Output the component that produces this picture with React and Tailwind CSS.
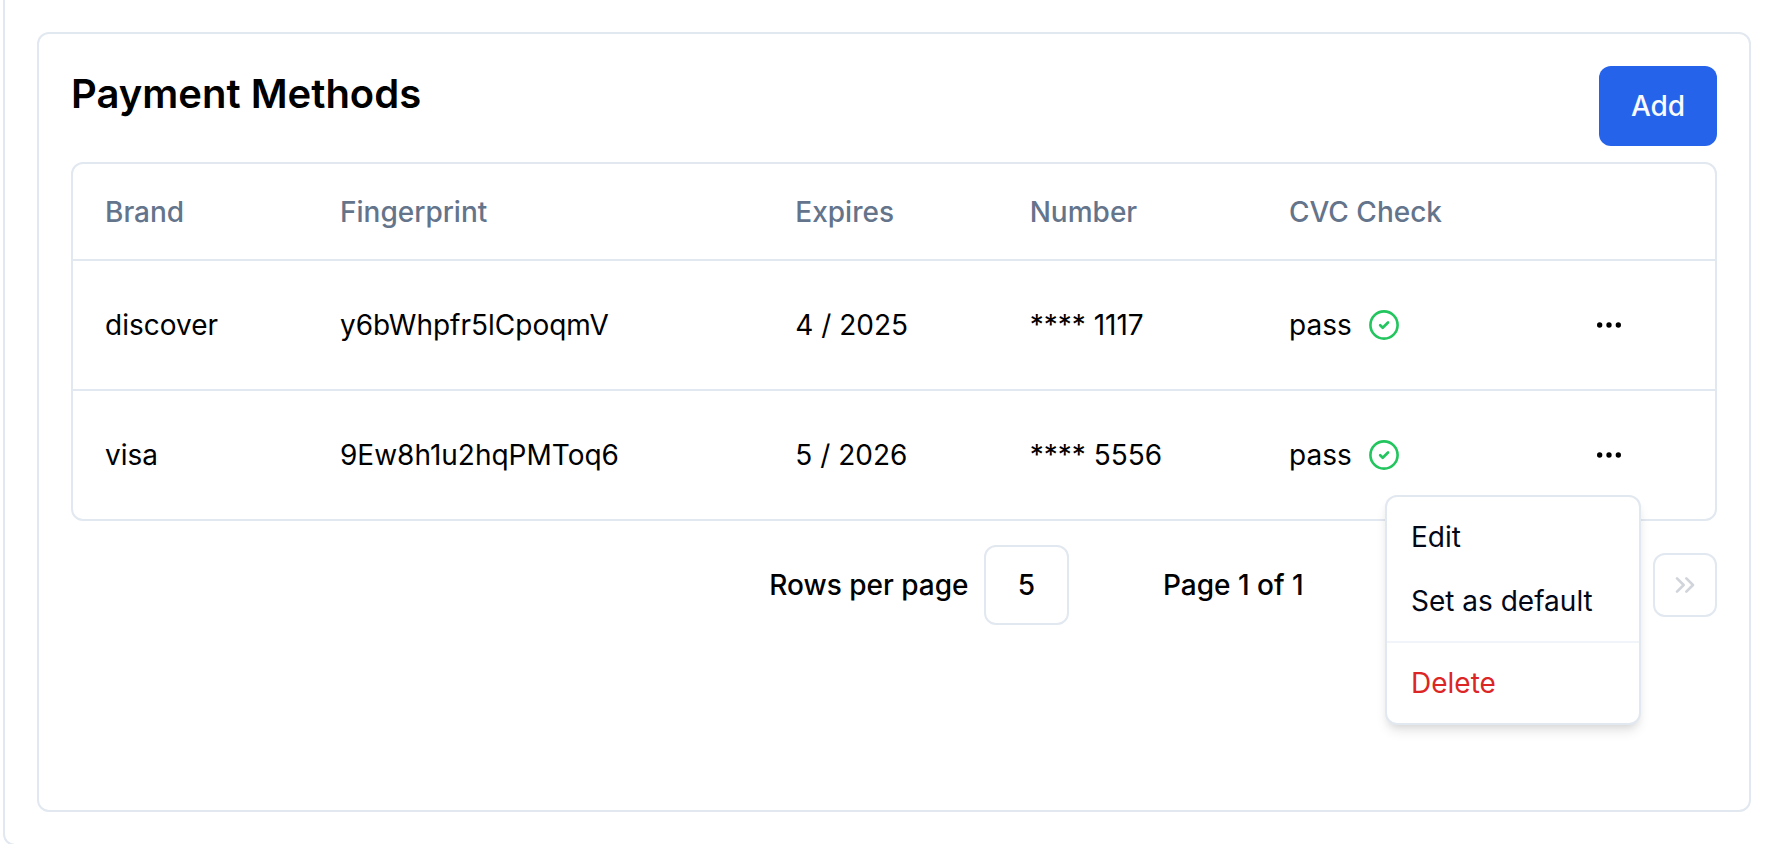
import { ChevronsRight, Ellipsis } from "lucide-react";

const methods = [
  { brand: "discover", fingerprint: "y6bWhpfr5lCpoqmV", expires: "4 / 2025", number: "**** 1117", check: "pass" },
  { brand: "visa", fingerprint: "9Ew8h1u2hqPMToq6", expires: "5 / 2026", number: "**** 5556", check: "pass" },
];

const columns = "grid grid-cols-[235px_455.3px_234.4px_259.3px_304px_1fr] items-center";

function PassIcon() {
  return (
    <svg className="size-[30px] text-[#22c55e]" viewBox="0 0 30 30" fill="none" stroke="currentColor" strokeLinecap="round" strokeLinejoin="round">
      <circle cx="15" cy="15" r="13.6" strokeWidth="2.6" />
      <path d="M11.2 15.3 L13.7 17.7 L19 12.5" strokeWidth="2.7" />
    </svg>
  );
}

function ActionsMenu() {
  return (
    <div className="absolute top-[104px] right-[74px] z-10 w-64 rounded-xl border-2 border-[#e2e8f0] bg-white py-2 text-[#020817] shadow-[0_8px_12px_-2px_rgba(0,0,0,0.1),0_4px_8px_-4px_rgba(0,0,0,0.1)]">
      <div className="flex h-16 items-center px-6">Edit</div>
      <div className="flex h-16 items-center px-6">Set as default</div>
      <div className="my-2 h-0.5 bg-[#f1f5f9]" />
      <div className="flex h-16 items-center px-6 text-[#dc2626]">Delete</div>
    </div>
  );
}

function Row({ method, last }) {
  return (
    <div className={`relative ${columns} ${last ? "h-32" : "h-[130px] border-b-2 border-[#e2e8f0]"}`}>
      <div className="pl-8">{method.brand}</div>
      <div className="pl-8">{method.fingerprint}</div>
      <div className="pl-8">{method.expires}</div>
      <div className="pl-8">{method.number}</div>
      <div className="flex items-center gap-[17px] pl-8">
        {method.check}
        <PassIcon />
      </div>
      <button className="ml-4 flex size-16 items-center justify-center">
        <Ellipsis className="size-8" />
      </button>
      {last && <ActionsMenu />}
    </div>
  );
}

export default function App() {
  return (
    <div className="h-[844px] overflow-hidden bg-white font-['Inter',sans-serif] text-[28px] leading-10 text-black">
      <div className="-mt-4 ml-[3px] h-[862px] w-[1800px] rounded-xl border-2 border-[#e2e8f0] pt-[46px] pl-8">
        <div className="h-[780px] w-[1714px] rounded-xl border-2 border-[#e2e8f0] px-8 pt-8">
          <div className="flex items-start justify-between">
            <h1 className="text-[40px] leading-14 font-semibold">Payment Methods</h1>
            <button className="h-20 w-[118px] rounded-xl bg-[#2563eb] font-medium text-[#f8fafc]">Add</button>
          </div>
          <div className="mt-4 rounded-xl border-2 border-[#e2e8f0]">
            <div className={`h-[97px] border-b-2 border-[#e2e8f0] font-medium text-[#64748b] ${columns}`}>
              <div className="pl-8">Brand</div>
              <div className="pl-8">Fingerprint</div>
              <div className="pl-8">Expires</div>
              <div className="pl-8">Number</div>
              <div className="pl-8">CVC Check</div>
            </div>
            <Row method={methods[0]} />
            <Row method={methods[1]} last />
          </div>
          <div className="mt-6 flex h-20 items-center justify-end font-medium">
            <span className="mr-[15.5px]">Rows per page</span>
            <div className="flex h-20 w-[85px] items-center justify-center rounded-xl border-2 border-[#e2e8f0]">5</div>
            <span className="ml-[94px] w-[490px]">Page 1 of 1</span>
            <button className="flex size-16 items-center justify-center rounded-xl border-2 border-[#e2e8f0] text-[#d1d5db]">
              <ChevronsRight className="size-8" />
            </button>
          </div>
        </div>
      </div>
    </div>
  );
}
